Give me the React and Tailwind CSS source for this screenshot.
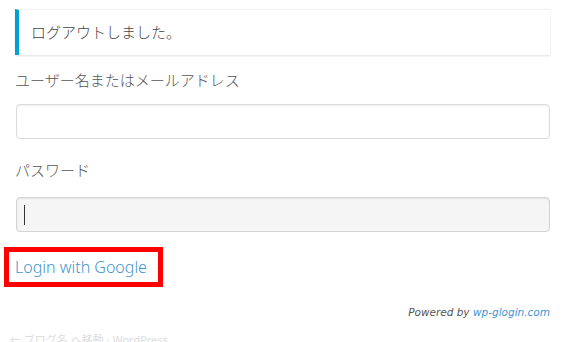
export default function App() {
  const jp = { fontFamily: '"Noto Sans", "Noto Sans CJK JP", sans-serif' };
  return (
    <div className="w-[572px] h-[342px] overflow-hidden bg-white relative" style={jp}>
      <div className="pl-[15px] pr-[22px]">
        <div className="mt-[9px] h-[46px] border-l-4 border-[#00a0d2] bg-white shadow-[0_1px_2px_rgba(0,0,0,0.12)] border-t border-t-[#f0f0f0] flex items-center pl-3 text-[15px] font-light text-[#444]">
          ログアウトしました。
        </div>
        <div className="mt-[15px] h-[20px] leading-[20px] text-[15px] font-light text-[#555]">ユーザー名またはメールアドレス</div>
        <div className="mt-[14px] h-[35px] ml-px rounded-[4px] border border-[#dcdcdc] bg-white shadow-[inset_0_1px_2px_rgba(0,0,0,0.07)]" />
        <div className="mt-[21px] h-[20px] leading-[20px] text-[15px] font-light text-[#555]">パスワード</div>
        <div className="mt-[17px] h-[35px] ml-px rounded-[4px] border border-[#d4d4d4] bg-[#f5f5f5] shadow-[inset_0_1px_2px_rgba(0,0,0,0.07)] flex items-center pl-[7px]">
          <div className="w-px h-[20px] bg-[#333]" />
        </div>
      </div>
      <div className="mt-[15px] ml-[4px] w-[159px] h-[40px] border-[5px] border-[#ff0000] flex items-center pl-[6px] text-[16px] font-light text-[#3f95cf]">
        Login with Google
      </div>
      <div className="mt-[18px] pr-[22px] text-right text-[10.5px] leading-[14px] italic text-[#555]" style={{ fontFamily: '"DejaVu Sans", "Noto Sans", sans-serif' }}>
        Powered by <span className="text-[#3f95cf]">wp-glogin.com</span>
      </div>
      <div className="absolute left-[10px] top-[334px] text-[11px] leading-[12px] text-[#dcdcdc] whitespace-nowrap">
        ← ブログ名 へ移動 · WordPress
      </div>
    </div>
  );
}
